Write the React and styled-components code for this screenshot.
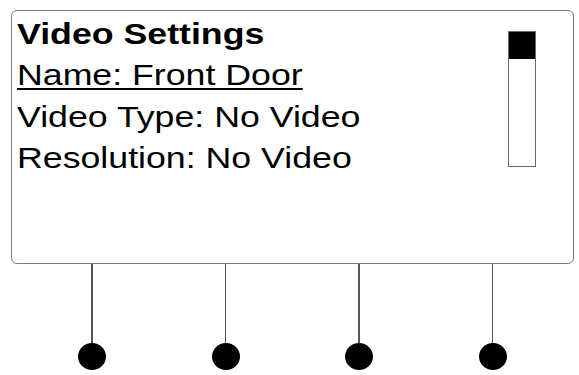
import styled, { createGlobalStyle } from "styled-components";

const Global = createGlobalStyle`
    html, body {
        margin: 0;
        padding: 0;
        background: #ffffff;
    }
    body {
        font-family: "Liberation Sans", Arial, sans-serif;
    }
`

const Page = styled.div`
    width: 579px;
    height: 375px;
    padding: 10px 0 0 11px;
    box-sizing: border-box;
    overflow: hidden;
`

const Screen = styled.div`
    width: 563px;
    height: 254px;
    box-sizing: border-box;
    border: 1.5px solid #7a7a7a;
    border-radius: 6px;
    display: flex;
    padding: 1.5px 37px 0 4.5px;
`

const Lines = styled.div`
    flex: 1;
    transform: scaleX(1.19);
    transform-origin: left top;
`

const Line = styled.div`
    font-size: 30px;
    line-height: 41.6px;
    color: #000;
    white-space: nowrap;
    font-weight: ${(p) => (p.$bold ? 700 : 400)};
    text-decoration: ${(p) => (p.$selected ? "underline" : "none")};
    text-decoration-thickness: 2px;
    text-underline-offset: 3px;
`

const Scrollbar = styled.div`
    width: 28px;
    height: 136px;
    margin-top: 18px;
    box-sizing: border-box;
    border: 1.5px solid #6a6a6a;
    display: flex;
    flex-direction: column;
`

const Thumb = styled.div`
    height: 27px;
    background: #000;
`

const Buttons = styled.div`
    display: flex;
    gap: 105.5px;
    padding-left: 67px;
`

const Button = styled.div`
    width: 28px;
    display: flex;
    flex-direction: column;
    align-items: center;
`

const Stem = styled.div`
    width: 1.5px;
    height: 79px;
    background: #555;
`

const Knob = styled.div`
    width: 28px;
    height: 27px;
    border-radius: 50%;
    background: #000;
`

const lines = [
    { text: "Video Settings", bold: true },
    { text: "Name: Front Door", selected: true },
    { text: "Video Type: No Video" },
    { text: "Resolution: No Video" },
]

export default function App() {
    return (
        <>
            <Global />
            <Page>
                <Screen>
                    <Lines>
                        {lines.map((l, i) => (
                            <Line key={i} $bold={l.bold} $selected={l.selected}>{l.text}</Line>
                        ))}
                    </Lines>
                    <Scrollbar>
                        <Thumb />
                    </Scrollbar>
                </Screen>
                <Buttons>
                    {[0, 1, 2, 3].map((i) => (
                        <Button key={i}>
                            <Stem />
                            <Knob />
                        </Button>
                    ))}
                </Buttons>
            </Page>
        </>
    )
}
